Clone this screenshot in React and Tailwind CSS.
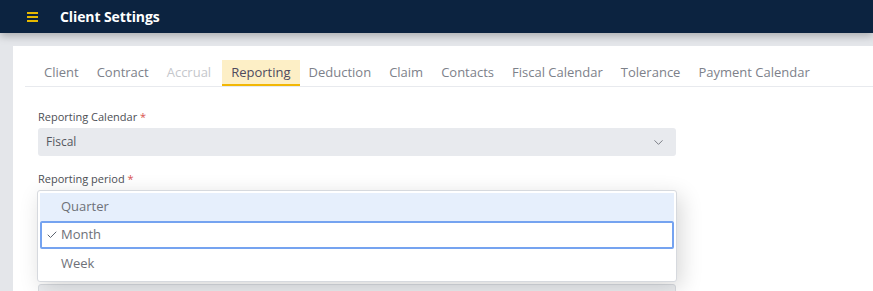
import React from 'react';
import { ChevronDown, Check } from 'lucide-react';

const tabs = ['Client', 'Contract', 'Accrual', 'Reporting', 'Deduction', 'Claim', 'Contacts', 'Fiscal Calendar', 'Tolerance', 'Payment Calendar'];

const Label = ({ children }) => (
    <div className="text-[11px] text-[#4d4f55] leading-[14px]">
        {children} <span className="text-[#d9534f]">*</span>
    </div>
);

const App = () => {
    return (
        <div className="w-[873px] h-[291px] overflow-hidden bg-[#e4e6ea] font-['Open_Sans',sans-serif]">
            {/* Top bar */}
            <div className="h-[33px] bg-[#0c2340] flex items-center relative z-10 shadow-[0_3px_8px_rgba(0,0,0,0.25)]">
                <div className="ml-[27px] w-[11px] flex flex-col gap-[2px]">
                    <span className="h-[2px] bg-[#e6b800]" />
                    <span className="h-[2px] bg-[#e6b800]" />
                    <span className="h-[2px] bg-[#e6b800]" />
                </div>
                <h1 className="ml-[22px] text-white font-bold text-[14px] tracking-[-0.1px]">Client Settings</h1>
            </div>

            <div className="pl-[13px] pt-[13px]">
                <div className="bg-white h-[260px] pl-[12px] pt-[14px]">
                    {/* Tabs */}
                    <div className="flex border-b border-[#e8eaee] pl-[10px] h-[27px]">
                        {tabs.map((t) => {
                            const active = t === 'Reporting';
                            const disabled = t === 'Accrual';
                            return (
                                <div
                                    key={t}
                                    className={
                                        active
                                            ? 'px-[9px] ml-[2px] text-[13px] leading-[25px] bg-[#fdefc6] text-[#4f4a5e] border-b-2 border-[#f2b705]'
                                            : disabled
                                                ? 'px-[9px] text-[13px] leading-[25px] text-[#c5c7cc]'
                                                : 'px-[9px] text-[13px] leading-[25px] text-[#7d818a]'
                                    }
                                >
                                    {t}
                                </div>
                            );
                        })}
                    </div>

                    <div className="w-[638px] ml-[13px] mt-[23px]">
                        <Label>Reporting Calendar</Label>
                        <div className="mt-[4px] h-[28px] rounded-[3px] bg-[#e8eaee] flex items-center justify-between px-[8px]">
                            <span className="text-[12px] text-[#55585f]">Fiscal</span>
                            <ChevronDown size={15} className="text-[#6b6f77] mr-[2px]" strokeWidth={1.4} />
                        </div>

                        <div className="mt-[16px]">
                            <Label>Reporting period</Label>
                        </div>

                        <div className="relative mt-[5px]">
                            {/* underlying fields */}
                            <div className="h-[28px] rounded-[3px] bg-[#e8eaee]" />
                            <div className="h-[65px]" />
                            <div className="h-[28px] rounded-[3px] bg-[#eceef1] border border-[#d9dce1]" />

                            {/* open dropdown */}
                            <div className="absolute left-[-1px] top-[-1px] w-[640px] bg-white border border-[#d6d9de] rounded-[3px] p-[2px] shadow-[4px_6px_22px_rgba(0,0,0,0.16)]">
                                <div className="h-[28px] bg-[#e6effc] flex items-center pl-[21px] text-[13px] text-[#6e7178]">
                                    Quarter
                                </div>
                                <div className="h-[28px] border-2 border-[#75a3f0] rounded-[2px] flex items-center pl-[4px] text-[13px] text-[#6e7178]">
                                    <Check size={12} strokeWidth={2} className="text-[#5c6470] mr-[3px]" />
                                    Month
                                </div>
                                <div className="h-[30px] flex items-center pl-[21px] text-[13px] text-[#6e7178]">
                                    Week
                                </div>
                            </div>
                        </div>
                    </div>
                </div>
            </div>
        </div>
    );
};

export default App;
